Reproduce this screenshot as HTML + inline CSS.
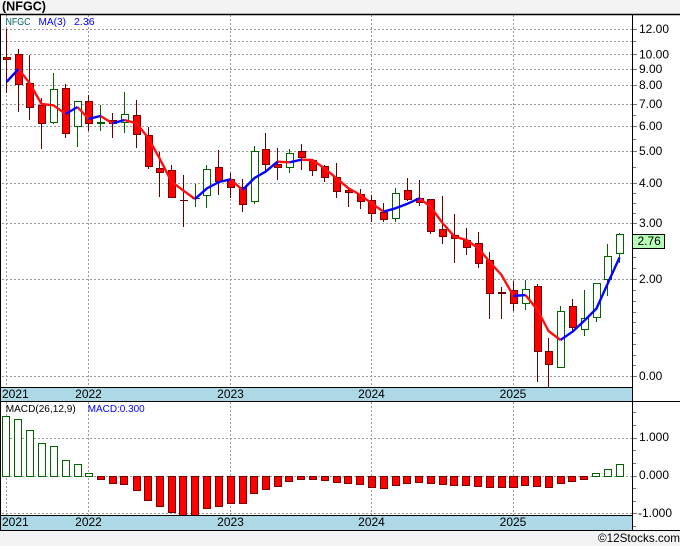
<!DOCTYPE html>
<html><head><meta charset="utf-8"><title>NFGC</title>
<style>
html,body{margin:0;padding:0;width:680px;height:546px;overflow:hidden;background:#f3f3f3}
svg{display:block}
text{font-family:"Liberation Sans",sans-serif;font-size:12px;fill:#000}
.l{font-size:10.5px}
</style></head><body>
<svg width="680" height="546" viewBox="0 0 680 546" xmlns="http://www.w3.org/2000/svg">
<rect x="0" y="14" width="680" height="517" fill="#fff"/>
<text x="2" y="10.5" style="font-size:13px;font-weight:bold" textLength="44" lengthAdjust="spacingAndGlyphs">(NFGC)</text>
<!-- grid -->
<g stroke="#999" stroke-width="1" stroke-dasharray="2 2" fill="none">
<path d="M2 29.5H632M2 41.5H632M2 54.5H632M2 69.5H632M2 85.5H632M2 104.5H632M2 126.5H632M2 151.5H632M2 183.5H632M2 223.5H632M2 279.5H632M2 376.5H632"/>
<path d="M2 438.5H632M2 476.5H632M2 513.5H632"/>
<path d="M6.5 15V387M88.5 15V387M230.5 15V387M371.5 15V387M513.5 15V387M6.5 402V515M88.5 402V515M230.5 402V515M371.5 402V515M513.5 402V515"/>
</g>
<!-- wicks -->
<path fill="none" stroke="#660000" stroke-width="1" d="M6.5 29V93M18.5 49V112M29.5 55V120M41.5 98V149M65.5 84V138M88.5 95V131M112.5 113V138M136.5 100V148M148.5 127V169M159.5 152V197M171.5 165V198M183.5 175V227M218.5 150V195M230.5 173V198M242.5 179V212M265.5 133V172M277.5 148V180M301.5 144V170M312.5 160V176M324.5 165V182M336.5 163V198M348.5 187V207M360.5 189V209M371.5 195V222M383.5 203V222M407.5 178V201M419.5 180V206M430.5 199V234M442.5 196V244M454.5 214V263M466.5 228V255M478.5 232V268M489.5 252V319M501.5 287V319M513.5 281V311M537.5 284V382M548.5 338V387M572.5 299V331"/>
<path fill="none" stroke="#006400" stroke-width="1" d="M53.5 73V124M77.5 101V147M100.5 105V131M124.5 92V133M195.5 184V207M206.5 165V208M254.5 146V204M289.5 149V173M395.5 188V222M525.5 280V310M560.5 306V368M584.5 290V336M596.5 283V322M607.5 244V296M619.5 233V263"/>
<!-- red bodies -->
<path fill="#ff0000" stroke="#7a0000" stroke-width="1" d="M3.5 57.5h7V59.5h-7zM15.5 54.5h7V84.5h-7zM26.5 83.5h7V107.5h-7zM38.5 105.5h7V123.5h-7zM62.5 88.5h7V133.5h-7zM85.5 101.5h7V123.5h-7zM109.5 120.5h7V123.5h-7zM133.5 115.5h7V134.5h-7zM145.5 135.5h7V166.5h-7zM156.5 168.5h7V172.5h-7zM168.5 170.5h7V197.5h-7zM215.5 167.5h7V181.5h-7zM227.5 179.5h7V187.5h-7zM239.5 187.5h7V204.5h-7zM262.5 149.5h7V164.5h-7zM274.5 164.5h7V167.5h-7zM298.5 151.5h7V157.5h-7zM309.5 160.5h7V170.5h-7zM321.5 166.5h7V177.5h-7zM333.5 177.5h7V191.5h-7zM345.5 190.5h7V192.5h-7zM357.5 194.5h7V201.5h-7zM368.5 200.5h7V213.5h-7zM380.5 212.5h7V219.5h-7zM404.5 190.5h7V199.5h-7zM416.5 198.5h7V202.5h-7zM427.5 199.5h7V231.5h-7zM439.5 229.5h7V236.5h-7zM451.5 235.5h7V238.5h-7zM463.5 240.5h7V247.5h-7zM475.5 243.5h7V263.5h-7zM486.5 260.5h7V293.5h-7zM510.5 290.5h7V303.5h-7zM534.5 286.5h7V351.5h-7zM545.5 351.5h7V364.5h-7zM569.5 306.5h7V327.5h-7z"/>
<path fill="none" stroke="#660000" stroke-width="1" d="M180 200.5H188"/>
<path fill="none" stroke="#660000" stroke-width="2" d="M498 293H506"/>
<!-- green bodies -->
<path fill="#fff" stroke="#006400" stroke-width="1" d="M50.5 89.5h7V122.5h-7zM74.5 101.5h7V126.5h-7zM121.5 114.5h7V122.5h-7zM203.5 169.5h7V195.5h-7zM251.5 151.5h7V201.5h-7zM286.5 153.5h7V167.5h-7zM392.5 193.5h7V218.5h-7zM522.5 289.5h7V303.5h-7zM557.5 311.5h7V367.5h-7zM581.5 318.5h7V329.5h-7zM593.5 283.5h7V317.5h-7zM604.5 256.5h7V279.5h-7zM616.5 234.5h7V253.5h-7z"/>
<path fill="none" stroke="#006400" stroke-width="2" d="M97 123H105"/>
<path fill="none" stroke="#006400" stroke-width="1" d="M192 198.5H200"/>
<!-- MA -->
<path fill="none" stroke="#ff1010" stroke-width="2.4" stroke-linejoin="round" d="M18.5 69L29.5 83L41.5 104L53.5 105.3L65.5 114M77.5 107L88.5 119M100.5 116L112.5 123.3M124.5 120L136.5 123.3L148.5 138.3L159.5 158.3L171.5 181.7L183.5 190.7L195 199M230.5 179.3L242.5 190M277.5 161.7L289.5 162.3M301.5 159.7L312.5 160L324.5 168.3L336.5 178.3L348.5 188.3L360.5 195L371.5 203.3L383.5 211.7M419.5 198.3L430.5 206.7L442.5 223L454.5 236.7L466.5 240L478.5 248.3L489.5 261.7L501.5 275L513.5 296M525.5 295L537.5 310L548.5 331L560.5 340"/>
<path fill="none" stroke="#0505ff" stroke-width="2.4" stroke-linejoin="round" d="M6.5 82L18.5 69M65.5 114L77.5 107M88.5 119L100.5 116M112.5 123.3L124.5 120M195 199L207 188.3L219 182L230.5 179.3M242.5 190L254.5 178L265.5 171.7L277.5 161.7M289.5 162.3L301.5 159.7M383.5 211.7L395.5 208.3L407.5 203.7L419.5 198.3M513.5 296L525.5 295M560.5 340L572.5 331.7L584.5 320.5L596.5 308.5L607.5 284L619.5 257.5"/>
<!-- MACD bars -->
<path fill="#fff" stroke="#006400" stroke-width="1" d="M2.5 416.5h7V476.5h-7zM14.5 419.5h7V476.5h-7zM26.5 430.5h7V476.5h-7zM38.5 443.5h7V476.5h-7zM50.5 446.5h7V476.5h-7zM62.5 460.5h7V476.5h-7zM74.5 464.5h7V476.5h-7zM85.5 473.5h7V476.5h-7zM592.5 473.5h7V476.5h-7zM604.5 469.5h7V476.5h-7zM616.5 464.5h7V476.5h-7z"/>
<path fill="#ff0000" stroke="#7a0000" stroke-width="1" d="M97.5 476.5h7V479.5h-7zM109.5 476.5h7V483.5h-7zM120.5 476.5h7V484.5h-7zM133.5 476.5h7V490.5h-7zM144.5 476.5h7V500.5h-7zM156.5 476.5h7V506.5h-7zM168.5 476.5h7V512.5h-7zM179.5 476.5h7V516h-7zM191.5 476.5h7V516h-7zM203.5 476.5h7V508.5h-7zM215.5 476.5h7V506.5h-7zM227.5 476.5h7V503.5h-7zM239.5 476.5h7V503.5h-7zM250.5 476.5h7V493.5h-7zM262.5 476.5h7V489.5h-7zM274.5 476.5h7V486.5h-7zM285.5 476.5h7V481.5h-7zM297.5 476.5h7V479.5h-7zM309.5 476.5h7V479.5h-7zM321.5 476.5h7V480.5h-7zM333.5 476.5h7V482.5h-7zM344.5 476.5h7V483.5h-7zM356.5 476.5h7V484.5h-7zM368.5 476.5h7V487.5h-7zM380.5 476.5h7V488.5h-7zM392.5 476.5h7V485.5h-7zM403.5 476.5h7V483.5h-7zM415.5 476.5h7V482.5h-7zM427.5 476.5h7V483.5h-7zM439.5 476.5h7V484.5h-7zM450.5 476.5h7V485.5h-7zM462.5 476.5h7V485.5h-7zM474.5 476.5h7V486.5h-7zM486.5 476.5h7V487.5h-7zM498.5 476.5h7V487.5h-7zM509.5 476.5h8V487.5h-8zM521.5 476.5h7V485.5h-7zM533.5 476.5h7V486.5h-7zM545.5 476.5h7V487.5h-7zM557.5 476.5h7V483.5h-7zM568.5 476.5h7V481.5h-7zM580.5 476.5h7V479.5h-7z"/>
<!-- bands -->
<rect x="1" y="387" width="631" height="15" fill="#add8e6"/>
<rect x="1" y="515" width="631" height="16" fill="#add8e6"/>
<!-- ticks -->
<g stroke="#777" stroke-width="1" fill="none">
<path d="M632 29.5H637M632 41.5H636M632 54.5H637M632 69.5H637M632 85.5H637M632 104.5H637M632 115.5H636M632 126.5H637M632 139.5H636M632 151.5H637M632 167.5H636M632 183.5H637M632 193.5H636M632 203.5H636M632 213.5H636M632 223.5H637M632 257.5H636M632 268.5H636M632 279.5H637M632 290.5H636M632 301.5H636M632 312.5H636M632 322.5H636M632 333.5H636M632 344.5H636M632 355.5H636M632 365.5H636M632 376.5H637"/>
<path d="M632 412.5H636M632 425.5H636M632 438.5H637M632 450.5H636M632 463.5H636M632 476.5H637M632 488.5H636M632 501.5H636M632 513.5H637M632 526.5H636"/>
</g>
<!-- frame -->
<g stroke="#000" stroke-width="1" fill="none">
<path d="M0 14.5H680" stroke-width="1.4"/>
<path d="M0.5 14V531"/>
<path d="M632.5 14V531"/>
<path d="M0 387.5H632"/>
<path d="M0 401.5H680"/>
<path d="M0 515.5H632"/>
<path d="M0 530.5H680"/>
</g>
<!-- price box -->
<path d="M632.5 234.5H664.5V248.5H632.5z" fill="#b6ffb6" stroke="#000"/>
<text x="637.5" y="245">2.76</text>
<!-- legend -->
<text class="l" x="5.5" y="25" style="fill:#006464" textLength="25" lengthAdjust="spacingAndGlyphs">NFGC</text>
<text class="l" x="38.5" y="25" style="fill:#0000ff" textLength="27.5" lengthAdjust="spacingAndGlyphs">MA(3)</text>
<text class="l" x="74" y="25" style="fill:#0000ff" textLength="20.7" lengthAdjust="spacingAndGlyphs">2.36</text>
<text class="l" x="5.7" y="412" textLength="70" lengthAdjust="spacingAndGlyphs">MACD(26,12,9)</text>
<text class="l" x="87.7" y="412" style="fill:#0000ff" textLength="57" lengthAdjust="spacingAndGlyphs">MACD:0.300</text>
<!-- y labels -->
<text x="639" y="33">12.00</text>
<text x="639" y="58.5">10.00</text>
<text x="639" y="73">9.00</text>
<text x="639" y="89">8.00</text>
<text x="639" y="108">7.00</text>
<text x="639" y="130">6.00</text>
<text x="639" y="155">5.00</text>
<text x="639" y="187">4.00</text>
<text x="639" y="227">3.00</text>
<text x="639" y="283">2.00</text>
<text x="639" y="380">0.00</text>
<text x="639" y="441">1.000</text>
<text x="639" y="479">0.000</text>
<text x="638" y="517">-1.000</text>
<!-- x labels -->
<text x="2" y="398">2021</text>
<text x="88.5" y="398" text-anchor="middle">2022</text>
<text x="230.5" y="398" text-anchor="middle">2023</text>
<text x="371.5" y="398" text-anchor="middle">2024</text>
<text x="513" y="398" text-anchor="middle">2025</text>
<text x="2" y="526">2021</text>
<text x="88.5" y="526" text-anchor="middle">2022</text>
<text x="230.5" y="526" text-anchor="middle">2023</text>
<text x="371.5" y="526" text-anchor="middle">2024</text>
<text x="513" y="526" text-anchor="middle">2025</text>
<text x="680" y="542" text-anchor="end" style="font-size:11.7px">©12Stocks.com</text>
</svg>
</body></html>
